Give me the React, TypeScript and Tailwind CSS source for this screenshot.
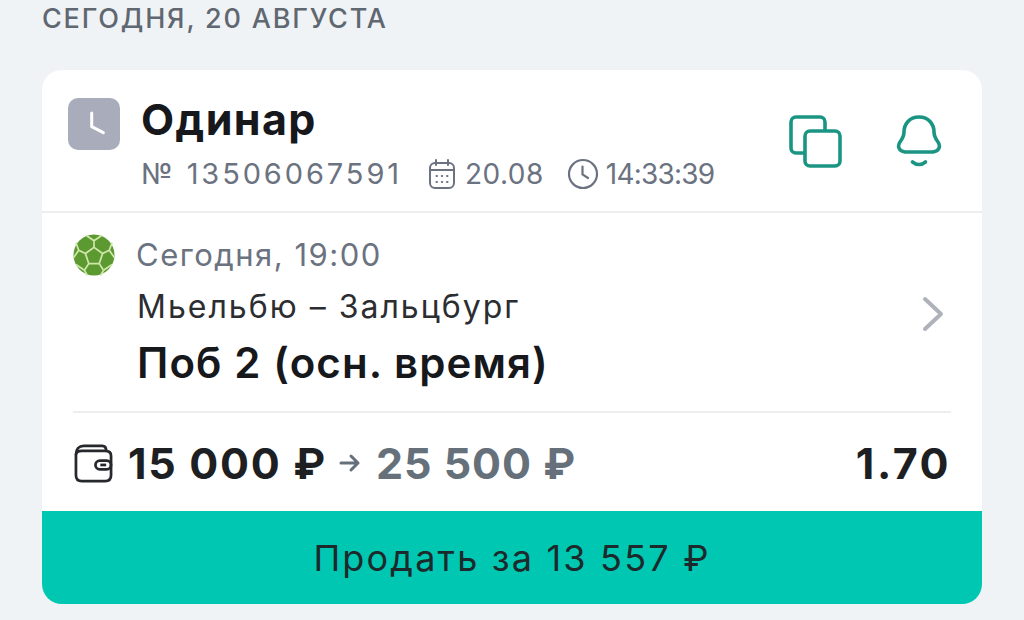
import React from 'react';

const ClockSmall = () => (
  <svg width="32" height="32" viewBox="0 0 32 32" fill="none" stroke="#6b7280" strokeWidth="2.2" strokeLinecap="round">
    <circle cx="16" cy="16" r="14" />
    <path d="M15.5 8.5V16.5L21 20" />
  </svg>
);

const CalendarIcon = () => (
  <svg width="28" height="32" viewBox="0 0 28 32" fill="none" stroke="#6b7280" strokeWidth="2" strokeLinecap="round">
    <rect x="2" y="5" width="24" height="25" rx="5" />
    <path d="M2 12H26M8 2V7M20 2V7" />
    <path d="M8.5 18H9M13.8 18H14.2M19 18H19.5M8.5 24H9M13.8 24H14.2M19 24H19.5" strokeWidth="2" />
  </svg>
);

const CopyIcon = () => (
  <svg width="54" height="54" viewBox="0 0 54 54" fill="none" stroke="#1a9583" strokeWidth="3.6" strokeLinejoin="round">
    <path d="M16 38H7a5 5 0 0 1-5-5V7a5 5 0 0 1 5-5h24a5 5 0 0 1 5 5v9" />
    <rect x="16" y="16" width="35" height="35" rx="5" />
  </svg>
);

const BellIcon = () => (
  <svg width="46" height="54" viewBox="0 0 46 54" fill="none" stroke="#1a9583" strokeWidth="3.6" strokeLinecap="round" strokeLinejoin="round">
    <path d="M23 2C13 2 8 9.500 8 17c0 4-1 6-4 10-2.500 3.500-2 9 5 10h28c7-1 7.500-6.500 5-10-3-4-4-6-4-10C38 9.500 33 2 23 2Z" />
    <path d="M16.500 47c4 3.300 9 3.300 13 0" />
  </svg>
);

const BallIcon = () => (
  <svg width="42" height="42" viewBox="0 0 44 44" className="shrink-0">
    <circle cx="22" cy="22" r="21.500" fill="#5c9a31" />
    <g fill="none" stroke="#cfe7a8" strokeWidth="1.800" strokeLinejoin="round">
      <path d="M22 14L31 20.500L27.500 31H16.500L13 20.500Z" />
      <path d="M22 14V7L14 1.500M22 7L30 1.500M31 20.500L38 17L41 9M38 17L43.500 25M13 20.500L6 17L3 9M6 17L0.500 25M27.500 31L32 38L41 32M32 38L29 43.500M16.500 31L12 38L3 32M12 38L15 43.500" />
    </g>
  </svg>
);

const WalletIcon = () => (
  <svg width="39" height="39" viewBox="0 0 40 40" fill="none" stroke="#26282c" strokeWidth="2.800" strokeLinejoin="round">
    <path d="M2 11C2 5 5 2 10 2H29C32 2 33 4 33 7" />
    <path d="M2 11C2 8 4 7 8 7H32C36 7 38 9 38 12V32C38 36 36 38 32 38H8C4 38 2 36 2 32Z" />
    <rect x="22" y="17" width="16" height="9" rx="4.500" />
    <path d="M27 21.500H33" />
  </svg>
);

const App = () => {
  return (
    <div className="h-[620px] w-[1024px] overflow-hidden bg-[#f0f3f6] px-[42px] font-['Inter',sans-serif]">
      {/* Date heading */}
      <h2 className="h-[70px] pt-[2px] text-[27px] leading-[34px] font-medium tracking-[1.800px] text-[#5f6770]">
        СЕГОДНЯ, 20 АВГУСТА
      </h2>

      {/* Card */}
      <div className="flex h-[534px] flex-col overflow-hidden rounded-[20px] bg-white">
        {/* Header */}
        <div className="flex h-[143px] shrink-0 border-b-2 border-[#eceef0] pl-[26px] pr-[40px] pt-[28px]">
          <div className="h-[52px] w-[52px] shrink-0 rounded-[10px] bg-[#a9adbb]">
            <svg width="52" height="52" viewBox="0 0 52 52" fill="none" stroke="#fff" strokeWidth="3" strokeLinecap="round" strokeLinejoin="round">
              <path d="M23.700 15V28.700L35.300 34.700" />
            </svg>
          </div>
          <div className="ml-[21px] flex-1">
            <div className="text-[43px] leading-[42px] font-bold tracking-[1.400px] text-[#17181c]">Одинар</div>
            <div className="mt-[17px] flex items-center text-[#6b7280]">
              <span className="text-[29px] leading-[34px] tracking-[2.900px]">№ 13506067591</span>
              <span className="ml-[26px]"><CalendarIcon /></span>
              <span className="ml-[9px] text-[28px] leading-[34px] tracking-[0.500px]">20.08</span>
              <span className="ml-[23px]"><ClockSmall /></span>
              <span className="ml-[7px] text-[28px] leading-[34px] tracking-[-0.800px]">14:33:39</span>
            </div>
          </div>
          <div className="mt-[17px] flex items-start gap-[53px]">
            <CopyIcon />
            <BellIcon />
          </div>
        </div>

        {/* Event */}
        <div className="relative flex-1 px-[31px]">
          <div className="flex h-[200px] flex-col border-b-2 border-[#eceef0]">
            <div className="mt-[20px] flex items-center">
              <BallIcon />
              <span className="ml-[21px] text-[31px] leading-[44px] tracking-[1.500px] text-[#6b7280]">Сегодня, 19:00</span>
            </div>
            <div className="ml-[64px] mt-[10px] text-[32px] leading-[40px] tracking-[2px] text-[#2b2d31]">Мьельбю – Зальцбург</div>
            <div className="ml-[64px] mt-[13px] text-[42px] leading-[46px] font-semibold tracking-[1.100px] text-[#17181c]">Поб 2 (осн. время)</div>
          </div>
          <svg width="24" height="36" viewBox="0 0 24 36" fill="none" stroke="#aeb2b9" strokeWidth="4" strokeLinecap="round" strokeLinejoin="round" className="absolute right-[37px] top-[83px]">
            <path d="M4 3L20 18L4 33" />
          </svg>

          {/* Stake */}
          <div className="flex h-[98px] items-center pl-[1px] pt-[2px]">
            <WalletIcon />
            <span className="ml-[15px] text-[43px] font-bold tracking-[1.700px] text-[#1d1f23]">15 000 ₽</span>
            <svg width="22" height="20" viewBox="0 0 22 20" fill="none" stroke="#66707b" strokeWidth="3" strokeLinecap="round" strokeLinejoin="round" className="ml-[12px]">
              <path d="M2 10H19M12 3L19 10L12 17" />
            </svg>
            <span className="ml-[15px] text-[43px] font-bold tracking-[1px] text-[#66707b]">25 500 ₽</span>
            <span className="ml-auto text-[43px] font-bold tracking-[2.500px] text-[#1d1f23]">1.70</span>
          </div>
        </div>

        {/* Sell button */}
        <div className="flex h-[93px] shrink-0 items-center justify-center bg-[#00c7b1] text-[36px] tracking-[2.200px] text-[#1d2a2c]">
          Продать за 13 557 ₽
        </div>
      </div>
    </div>
  );
};

export default App;
